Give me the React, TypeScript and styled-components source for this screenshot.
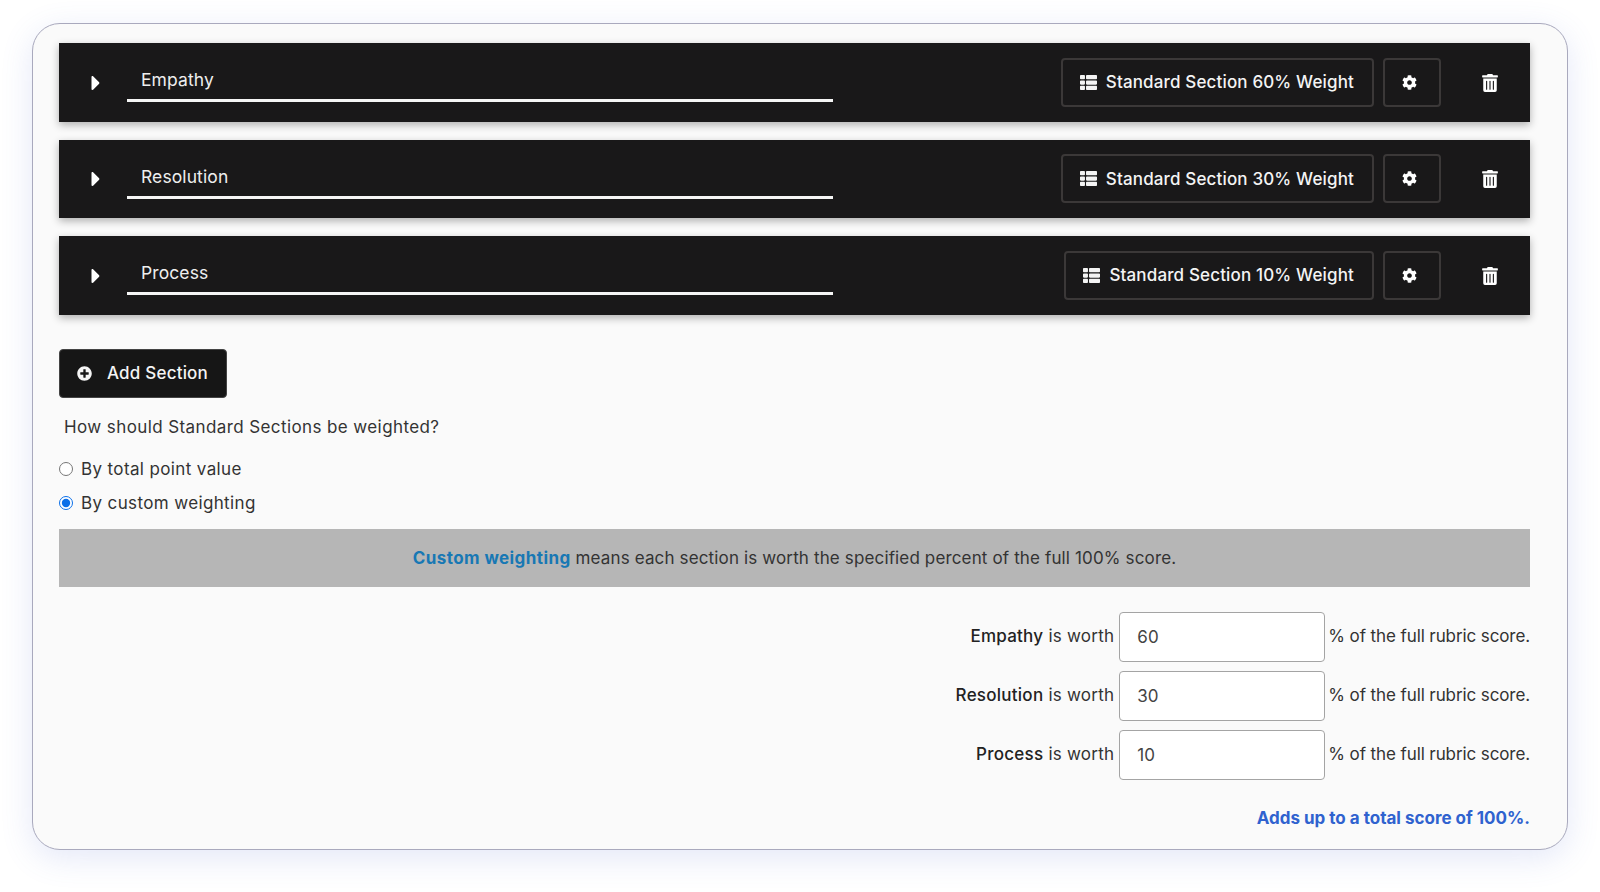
import React from 'react';
import styled, { createGlobalStyle } from 'styled-components';
import { FaCaretRight, FaCog, FaPlusCircle, FaThList, FaTrashAlt } from 'react-icons/fa';

const sections = [
  { name: 'Empathy', weight: 60 },
  { name: 'Resolution', weight: 30 },
  { name: 'Process', weight: 10 },
];

const App: React.FC = () => {
  return (
    <Page>
      <GlobalStyles />
      <Card>
        <Sections>
          {sections.map((s) => (
            <SectionBar key={s.name}>
              <Caret>
                <FaCaretRight />
              </Caret>
              <TitleField>{s.name}</TitleField>
              <BarActions>
                <TypeButton>
                  <FaThList />
                  Standard Section {s.weight}% Weight
                </TypeButton>
                <GearButton>
                  <FaCog />
                </GearButton>
                <TrashButton>
                  <FaTrashAlt />
                </TrashButton>
              </BarActions>
            </SectionBar>
          ))}
        </Sections>

        <AddButton>
          <FaPlusCircle />
          Add Section
        </AddButton>

        <Question>How should Standard Sections be weighted?</Question>

        <RadioGroup>
          <RadioRow>
            <input type="radio" name="weighting" />
            By total point value
          </RadioRow>
          <RadioRow>
            <input type="radio" name="weighting" defaultChecked />
            By custom weighting
          </RadioRow>
        </RadioGroup>

        <InfoBand>
          <strong>Custom weighting</strong> means each section is worth the specified percent of the full
          100% score.
        </InfoBand>

        <WorthList>
          {sections.map((s) => (
            <WorthRow key={s.name}>
              <WorthLabel>
                <b>{s.name}</b> is worth
              </WorthLabel>
              <WorthInput defaultValue={s.weight} />
              <WorthSuffix>% of the full rubric score.</WorthSuffix>
            </WorthRow>
          ))}
        </WorthList>

        <TotalNote>Adds up to a total score of 100%.</TotalNote>
      </Card>
    </Page>
  );
};

const GlobalStyles = createGlobalStyle`
  body {
    margin: 0;
    background: #fff;
    font-family: "Inter", "Liberation Sans", sans-serif;
  }
`;

const Page = styled.div`
  width: 1600px;
  height: 892px;
  padding: 23px 32px 0;
  box-sizing: border-box;
  overflow: hidden;
`;

const Card = styled.div`
  width: 1536px;
  height: 827px;
  box-sizing: border-box;
  padding: 19px 37px 0 26px;
  background: #fafafa;
  border: 1px solid #a9a9bd;
  border-radius: 28px;
  box-shadow: 0 8px 32px rgba(90, 110, 210, 0.16);
`;

const Sections = styled.div`
  display: flex;
  flex-direction: column;
  gap: 18px;
`;

const SectionBar = styled.div`
  height: 78.5px;
  background: #191819;
  display: flex;
  align-items: center;
  padding: 0 11px 0 25px;
  box-shadow: 0 3px 8px rgba(0, 0, 0, 0.3);
`;

const Caret = styled.span`
  width: 43px;
  color: #fff;
  font-size: 24px;
  display: flex;
  align-items: center;
  margin-top: 1px;
`;

const TitleField = styled.div`
  width: 706px;
  box-sizing: border-box;
  height: 41px;
  padding: 5px 0 0 14px;
  margin-top: -1px;
  border-bottom: 3px solid #f5f5f5;
  color: #eee;
  font-size: 17.5px;
  letter-spacing: 0.1px;
  line-height: 28px;
`;

const BarActions = styled.div`
  margin-left: auto;
  display: flex;
  align-items: center;
`;

const TypeButton = styled.div`
  height: 49px;
  box-sizing: border-box;
  display: flex;
  align-items: center;
  gap: 9px;
  padding: 0 18px 0 17px;
  border: 2px solid #3b3838;
  border-radius: 4px;
  color: #f4f4f4;
  font-size: 17px;
  font-weight: 500;
  letter-spacing: 0.15px;
  white-space: nowrap;

  svg {
    width: 17px;
    height: 17px;
  }
`;

const GearButton = styled.div`
  width: 58px;
  height: 49px;
  box-sizing: border-box;
  margin-left: 9px;
  padding: 0 0 0 17px;
  display: flex;
  align-items: center;
  border: 2px solid #3b3838;
  border-radius: 4px;
  color: #fff;
  font-size: 15px;
`;

const TrashButton = styled.div`
  width: 58px;
  display: flex;
  justify-content: center;
  color: #fff;
  font-size: 18px;
  margin-left: 20px;
  padding-top: 1px;
`;

const AddButton = styled.div`
  width: 168px;
  height: 49px;
  box-sizing: border-box;
  margin-top: 34px;
  padding-left: 17px;
  display: flex;
  align-items: center;
  gap: 15px;
  background: #161616;
  border: 1px solid #444;
  border-radius: 4px;
  color: #f4f4f4;
  font-size: 17px;
  font-weight: 500;
  letter-spacing: 0.2px;

  svg {
    width: 15px;
    height: 15px;
  }
`;

const Question = styled.div`
  margin: 17px 0 0 5px;
  color: #333;
  font-size: 17px;
  letter-spacing: 0.4px;
  line-height: 24px;
`;

const RadioGroup = styled.div`
  margin-top: 18px;
  display: flex;
  flex-direction: column;
  gap: 10px;
`;

const RadioRow = styled.label`
  height: 24px;
  display: flex;
  align-items: center;
  gap: 8px;
  color: #333;
  font-size: 17px;
  letter-spacing: 0.37px;

  input {
    width: 14px;
    height: 14px;
    margin: 0;
    accent-color: #0b6fe8;
  }
`;

const InfoBand = styled.div`
  margin-top: 14px;
  height: 58px;
  display: flex;
  align-items: center;
  justify-content: center;
  white-space: pre-wrap;
  background: #b6b6b6;
  color: #333;
  font-size: 17px;
  letter-spacing: 0.14px;

  strong {
    color: #1878b4;
    font-weight: 700;
    letter-spacing: 0.42px;
  }
`;

const WorthList = styled.div`
  margin-top: 25px;
  display: flex;
  flex-direction: column;
  gap: 8.5px;
`;

const WorthRow = styled.div`
  height: 50.5px;
  display: flex;
  align-items: center;
  justify-content: flex-end;
  color: #333;
  font-size: 17px;
`;

const WorthLabel = styled.span`
  margin-right: 5px;
  padding-bottom: 2px;
  letter-spacing: 0.25px;

  b {
    color: #222;
    font-weight: 500;
  }
`;

const WorthInput = styled.input`
  width: 206px;
  height: 50.5px;
  box-sizing: border-box;
  padding: 0 17px;
  background: #fff;
  border: 1px solid #a4a4a4;
  border-radius: 4px;
  color: #444;
  font-family: inherit;
  font-size: 17px;
`;

const WorthSuffix = styled.span`
  margin-left: 3px;
  padding-bottom: 2px;
  letter-spacing: -0.1px;
`;

const TotalNote = styled.div`
  margin-top: 25.5px;
  text-align: right;
  color: #2f62cf;
  font-size: 17px;
  font-weight: 700;
  line-height: 24px;
`;

export default App;
